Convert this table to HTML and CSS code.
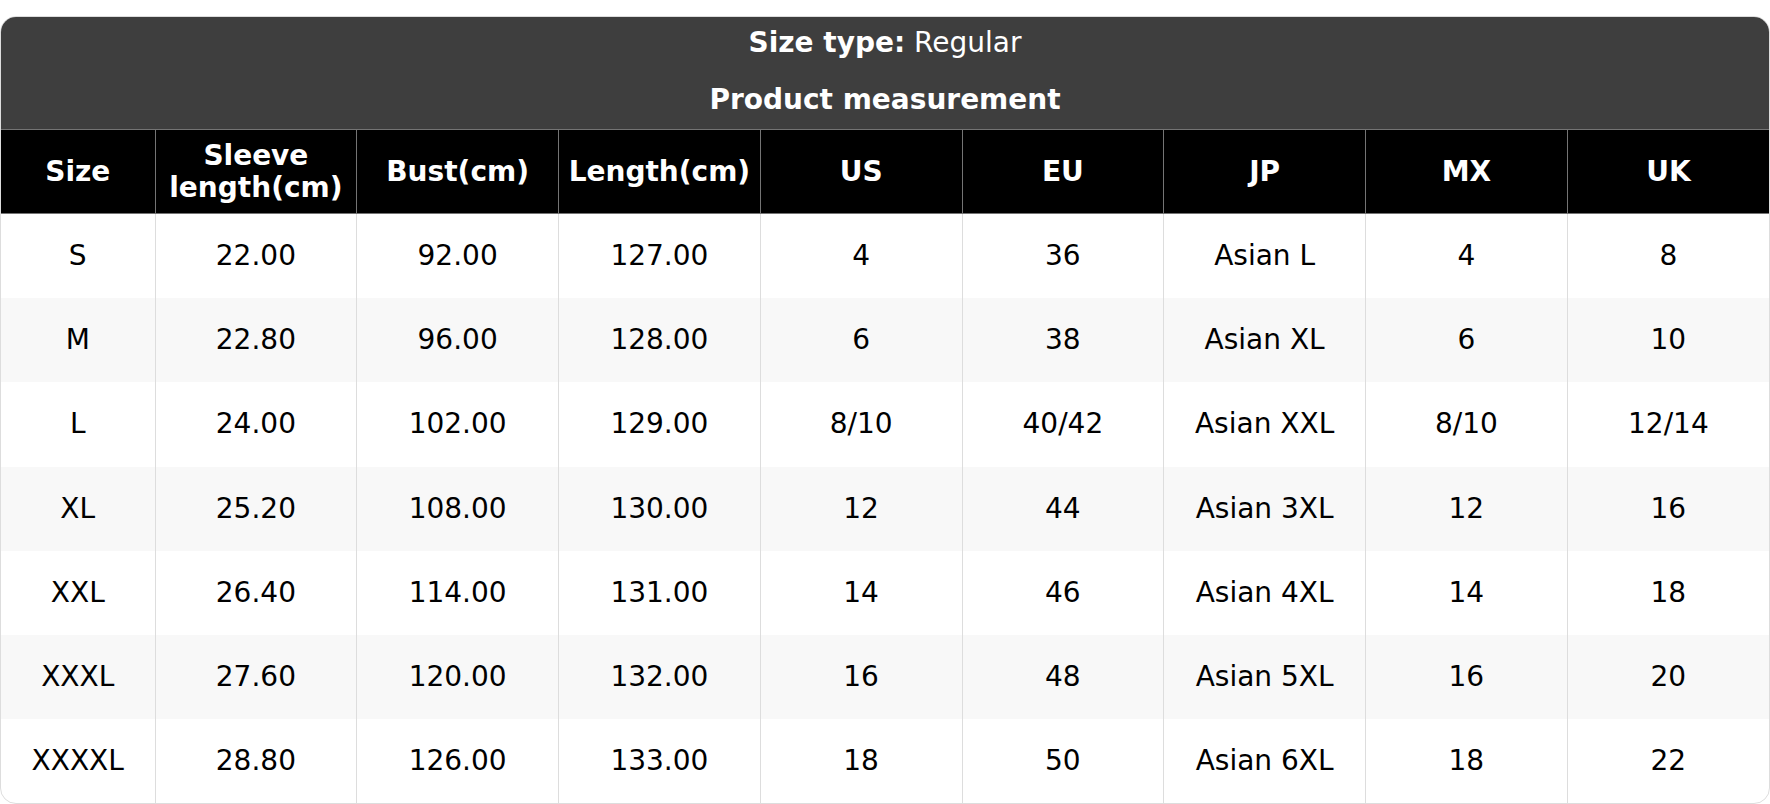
FILE: index.html
```html
<!DOCTYPE html>
<html lang="en">
<head>
<meta charset="utf-8">
<title>Size chart</title>
<link rel="stylesheet" href="styles.css">
</head>
<body>
<div class="chart">
  <div class="chart-head">
    <div class="chart-line"><b>Size type:</b> Regular</div>
    <div class="chart-line"><b>Product measurement</b></div>
  </div>
  <table class="sizes">
    <colgroup>
      <col class="col-size">
      <col><col><col><col><col><col><col><col>
    </colgroup>
    <thead>
      <tr>
        <th>Size</th>
        <th>Sleeve<br>length(cm)</th>
        <th>Bust(cm)</th>
        <th>Length(cm)</th>
        <th>US</th>
        <th>EU</th>
        <th>JP</th>
        <th>MX</th>
        <th>UK</th>
      </tr>
    </thead>
    <tbody>
      <tr><td>S</td><td>22.00</td><td>92.00</td><td>127.00</td><td>4</td><td>36</td><td>Asian L</td><td>4</td><td>8</td></tr>
      <tr><td>M</td><td>22.80</td><td>96.00</td><td>128.00</td><td>6</td><td>38</td><td>Asian XL</td><td>6</td><td>10</td></tr>
      <tr><td>L</td><td>24.00</td><td>102.00</td><td>129.00</td><td>8/10</td><td>40/42</td><td>Asian XXL</td><td>8/10</td><td>12/14</td></tr>
      <tr><td>XL</td><td>25.20</td><td>108.00</td><td>130.00</td><td>12</td><td>44</td><td>Asian 3XL</td><td>12</td><td>16</td></tr>
      <tr><td>XXL</td><td>26.40</td><td>114.00</td><td>131.00</td><td>14</td><td>46</td><td>Asian 4XL</td><td>14</td><td>18</td></tr>
      <tr><td>XXXL</td><td>27.60</td><td>120.00</td><td>132.00</td><td>16</td><td>48</td><td>Asian 5XL</td><td>16</td><td>20</td></tr>
      <tr><td>XXXXL</td><td>28.80</td><td>126.00</td><td>133.00</td><td>18</td><td>50</td><td>Asian 6XL</td><td>18</td><td>22</td></tr>
    </tbody>
  </table>
</div>
</body>
</html>
```
FILE: styles.css
```css
html, body {
  margin: 0;
  padding: 0;
  background: #ffffff;
}

body {
  font-family: "DejaVu Sans", sans-serif;
  font-size: 28px;
  color: #000000;
}

.chart {
  margin-top: 16px;
  width: 1768px;
  border: 1px solid #dddddd;
  border-radius: 16px;
  overflow: hidden;
}

.chart-head {
  background: #3e3e3e;
  color: #ffffff;
  text-align: center;
  padding: 10px 0 13px;
  display: flex;
  flex-direction: column;
  gap: 25px;
}

.chart-line {
  line-height: 32px;
}

.sizes {
  width: 100%;
  border-collapse: collapse;
  table-layout: fixed;
}

.col-size {
  width: 154px;
}

.sizes th {
  background: #000000;
  color: #ffffff;
  font-weight: bold;
  border: 1px solid #747474;
  height: 83px;
  padding: 0 4px;
  line-height: 32px;
  text-align: center;
}

.sizes thead tr th:first-child {
  border-left: none;
}

.sizes thead tr th:last-child {
  border-right: none;
}

.sizes td {
  border-left: 1px solid #dddddd;
  border-right: 1px solid #dddddd;
  height: 84.2px;
  padding: 0;
  text-align: center;
  line-height: 32px;
}

.sizes td:first-child {
  border-left: none;
}

.sizes td:last-child {
  border-right: none;
}

.sizes tbody tr:nth-child(even) td {
  background: #f8f8f8;
}
```
